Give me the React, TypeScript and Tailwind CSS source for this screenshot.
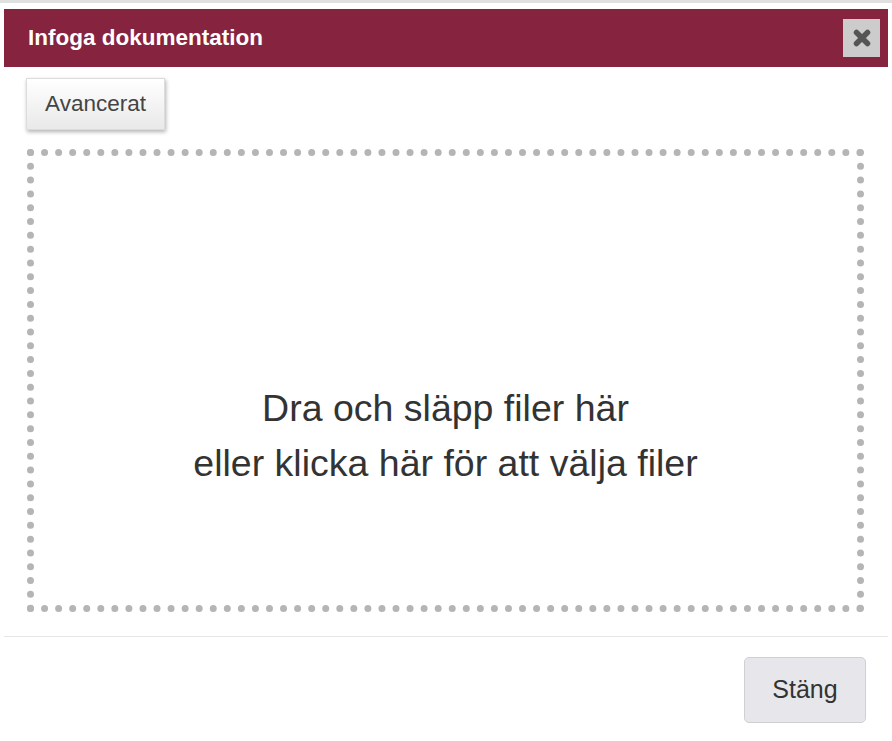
const font = "font-['Liberation_Sans',Arial,sans-serif]";

const CloseIcon = () => (
  <svg width="18" height="18" viewBox="0 0 18 18">
    <path
      d="M3.5 3.5 L14.5 14.5 M14.5 3.5 L3.5 14.5"
      stroke="#555"
      strokeWidth="5.5"
      strokeLinecap="round"
    />
  </svg>
);

export default function App() {
  return (
    <div className={"w-[892px] h-[741px] bg-white " + font}>
      <div className="h-[3px] bg-[#e0e0e0]"></div>
      <div className="mx-1 mt-[6px] w-[884px]">
        {/* header */}
        <div className="h-[58px] bg-[#86233f] flex items-center justify-between pl-6 pr-2">
          <h1 className="text-white font-bold text-[22.5px]">Infoga dokumentation</h1>
          <button className="w-[37px] h-[38px] bg-[#cccccc] flex items-center justify-center">
            <CloseIcon />
          </button>
        </div>

        {/* body */}
        <div className="pt-[11px]">
          <button className="ml-[22px] w-[139px] h-[52px] text-[22.5px] text-[#444] bg-gradient-to-b from-white to-[#e9e9e9] border border-[#dcdcdc] shadow-[1px_2px_4px_rgba(0,0,0,0.3)]">
            Avancerat
          </button>
          <div className="ml-[23px] mr-[24px] mt-[19px] h-[463px] border-[7px] border-dotted border-[#b5b5b5] flex flex-col items-center pt-[225px] text-[37.5px] leading-[55px] text-[#333]">
            <p>Dra och släpp filer här</p>
            <p>eller klicka här för att välja filer</p>
          </div>
        </div>

        <hr className="mt-6 border-0 h-px bg-[#e5e5e5]" />

        {/* footer */}
        <div className="flex justify-end pt-[20px] pr-[22px]">
          <button className="w-[122px] h-[66px] rounded-[5px] bg-[#e6e6eb] border border-[#cfcfd4] text-[25px] text-[#333]">
            Stäng
          </button>
        </div>
      </div>
    </div>
  );
}
